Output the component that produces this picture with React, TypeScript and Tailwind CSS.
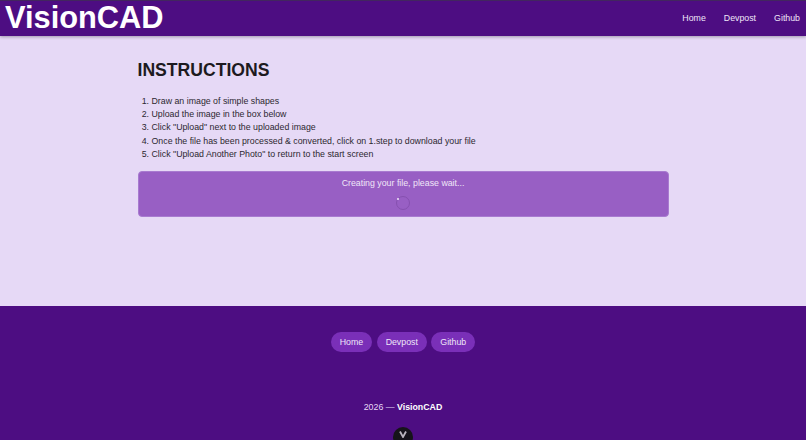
const navLinks = ['Home', 'Devpost', 'Github']

const steps = [
  'Draw an image of simple shapes',
  'Upload the image in the box below',
  'Click "Upload" next to the uploaded image',
  'Once the file has been processed & converted, click on 1.step to download your file',
  'Click "Upload Another Photo" to return to the start screen',
]

export default function App() {
  return (
    <div className="h-[440px] overflow-hidden bg-[#e6d9f6] font-['Liberation_Sans',sans-serif] antialiased">
      {/* Header */}
      <header className="flex h-[36px] items-center justify-between border-t border-[#42265f] bg-[#4d0d82] pl-[5px] pr-[6px] shadow-[0_1px_3px_rgba(0,0,0,0.3)]">
        <span className="text-[30.8px] font-bold leading-none text-white">VisionCAD</span>
        <nav className="flex gap-[18px] text-[8.8px] text-[#efe6f8]">
          {navLinks.map((link) => (
            <a key={link}>{link}</a>
          ))}
        </nav>
      </header>

      {/* Instructions */}
      <main className="mx-auto h-[270px] w-[531px] pt-[23px]">
        <h1 className="text-[17.6px] font-bold leading-[22px] text-[#1d1a20]">INSTRUCTIONS</h1>
        <ol className="mt-[14px] list-decimal pl-[14px] text-[8.8px] leading-[13.2px] text-[#2c2830]">
          {steps.map((step) => (
            <li key={step}>{step}</li>
          ))}
        </ol>
        <div className="mt-[10px] flex h-[46px] flex-col items-center rounded-[4px] border border-[#a87bd0] bg-[#985fc4] pt-[5px]">
          <p className="text-[8.8px] leading-[13px] text-[#f0e6f8]">Creating your file, please wait...</p>
          <div className="relative mt-[6px] h-[14px] w-[14px] rounded-full border border-[#8650b0]">
            <span className="absolute left-[0px] top-[1px] h-[1.5px] w-[1.5px] rounded-full bg-[#f0e6f8]" />
          </div>
        </div>
      </main>

      {/* Footer */}
      <footer className="flex h-[134px] flex-col items-center bg-[#4d0d82] pt-[26px]">
        <div className="flex gap-[4.4px]">
          {navLinks.map((link) => (
            <a key={link} className="flex h-[20px] items-center rounded-full bg-[#7a2fb8] px-[9px] pt-[1px] text-[8.8px] text-[#efe6f8]">
              {link}
            </a>
          ))}
        </div>
        <p className="mt-[49px] text-[8.8px] leading-[13px] text-[#e6d9f6]">
          2026 — <span className="font-bold text-white">VisionCAD</span>
        </p>
        <div className="mt-[13px] flex h-[20px] w-[20px] shrink-0 items-start justify-center rounded-full bg-[#16141a] pt-[4px]">
          <svg width="8" height="7" viewBox="0 0 8 7" fill="none" stroke="#b9b5bd" strokeWidth="1.8">
            <path d="M1 0.5 L4 6 L7 0.5" />
          </svg>
        </div>
      </footer>
    </div>
  )
}
